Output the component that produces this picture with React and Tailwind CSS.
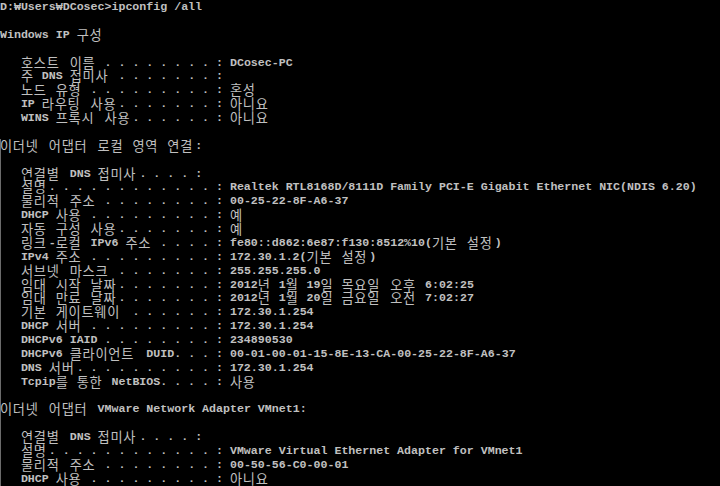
const CELL = 6.972
const HANGUL = /([\uAC00-\uD7A3\u3131-\u318E]+)/

// 한글은 콘솔에서 두 칸을 차지한다
const cols = (s) => [...s].reduce((n, ch) => n + (/[\uAC00-\uD7A3\u3131-\u318E]/.test(ch) ? 2 : 1), 0)

const row = (label, value = '') => {
  let s = '   ' + label
  let c = cols(s)
  while (c < 31) {
    s += c % 2 === 1 ? '.' : ' '
    c++
  }
  return s + ': ' + value
}

const top = [
  'D:₩Users₩DCosec>ipconfig /all',
  '',
  'Windows IP 구성',
  '',
  row('호스트 이름', 'DCosec-PC'),
  row('주 DNS 접미사'),
  row('노드 유형', '혼성'),
  row('IP 라우팅 사용', '아니요'),
  row('WINS 프록시 사용', '아니요'),
  '',
]

const rest = [
  '이더넷 어댑터 로컬 영역 연결:',
  '',
  '   연결별 DNS 접미사. . . . :',
  row('설명', 'Realtek RTL8168D/8111D Family PCI-E Gigabit Ethernet NIC(NDIS 6.20)'),
  row('물리적 주소', '00-25-22-8F-A6-37'),
  row('DHCP 사용', '예'),
  row('자동 구성 사용', '예'),
  row('링크-로컬 IPv6 주소', 'fe80::d862:6e87:f130:8512%10(기본 설정)'),
  row('IPv4 주소', '172.30.1.2(기본 설정)'),
  row('서브넷 마스크', '255.255.255.0'),
  row('임대 시작 날짜', '2012년 1월 19일 목요일 오후 6:02:25'),
  row('임대 만료 날짜', '2012년 1월 20일 금요일 오전 7:02:27'),
  row('기본 게이트웨이', '172.30.1.254'),
  row('DHCP 서버', '172.30.1.254'),
  row('DHCPv6 IAID', '234890530'),
  row('DHCPv6 클라이언트 DUID', '00-01-00-01-15-8E-13-CA-00-25-22-8F-A6-37'),
  row('DNS 서버', '172.30.1.254'),
  row('Tcpip를 통한 NetBIOS', '사용'),
  '',
  '이더넷 어댑터 VMware Network Adapter VMnet1:',
  '',
  '   연결별 DNS 접미사. . . . :',
  row('설명', 'VMware Virtual Ethernet Adapter for VMnet1'),
  row('물리적 주소', '00-50-56-C0-00-01'),
  row('DHCP 사용', '아니요'),
]

function Line({ text }) {
  const parts = text.split(HANGUL)
  return (
    <div className="h-[13.886px] leading-[13.886px] whitespace-pre">
      {parts.map((p, i) =>
        i % 2 === 1 ? (
          <span
            key={i}
            className="inline-block align-top h-[13.886px] leading-[13.886px] overflow-visible font-normal text-[13.2px] tracking-[0.74px] text-[#c0c0c0] font-['Noto_Sans_CJK_KR',sans-serif]"
            style={{ width: p.length * 2 * CELL }}
          >
            {p}
          </span>
        ) : (
          <span key={i}>{p}</span>
        )
      )}
    </div>
  )
}

export default function App() {
  return (
    <div className="h-screen w-full overflow-hidden bg-black text-[#c0c0c0] font-['Liberation_Mono',monospace] font-bold text-[11.62px]">
      {top.map((t, i) => (
        <Line key={'t' + i} text={t} />
      ))}
      <div className="shadow-[inset_1px_0_0_#6b6b6b]">
        {rest.map((t, i) => (
          <Line key={'r' + i} text={t} />
        ))}
      </div>
    </div>
  )
}
